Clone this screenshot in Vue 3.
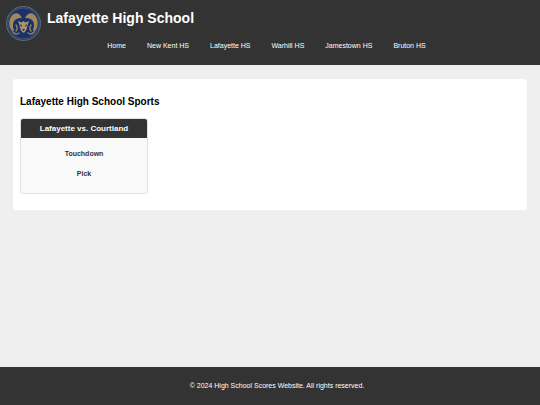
<template>
  <div class="page">
    <header class="site-header">
      <div class="brand">
        <svg class="logo" viewBox="0 0 70 70" role="img" aria-label="Lafayette Rams">
          <circle cx="35" cy="35" r="34" fill="#333a4c" stroke="#737c92" stroke-width="1.5" />
          <circle cx="35" cy="35" r="31" fill="#1a3266" stroke="#68728c" stroke-width="1" />
          <path d="M32 24C28 15 20 12 14 17 7 23 5 33 8 44l5 8 3-4c-3-7-3-14 1-19 4-4 9-5 15-5z" fill="#a08960" />
          <path d="M38 24c4-9 12-12 18-7 7 6 9 16 6 27l-5 8-3-4c3-7 3-14-1-19-4-4-9-5-15-5z" fill="#a08960" />
          <g fill="none" stroke="#8b8068" stroke-width="3" stroke-linecap="round">
            <path d="M20 38c3 4 3 8 0 12M14 52c3 4 8 5 12 2" />
            <path d="M50 38c-3 4-3 8 0 12M56 52c-3 4-8 5-12 2" />
          </g>
          <path d="M24 30l7 3 4-3 4 3 7-3-3 9-2 8-4 6h-4l-4-6-2-8z" fill="#a99573" />
          <path d="M28 36l4 3-2 3zM42 36l-4 3 2 3zM32 46h6l-3 4z" fill="#182746" />
        </svg>
        <h1>{{ schoolName }}</h1>
      </div>
      <nav aria-label="Schools">
        <ul>
          <li v-for="link in links" :key="link">
            <a href="#">{{ link }}</a>
          </li>
        </ul>
      </nav>
    </header>

    <main class="content">
      <h2>{{ schoolName }} Sports</h2>
      <article v-for="game in games" :key="game.title" class="game-card">
        <h3>{{ game.title }}</h3>
        <div class="game-details">
          <p v-for="play in game.plays" :key="play">{{ play }}</p>
        </div>
      </article>
    </main>

    <footer class="site-footer">
      <p>&copy; 2024 High School Scores Website. All rights reserved.</p>
    </footer>
  </div>
</template>

<script setup>
const schoolName = 'Lafayette High School';

const links = [
  'Home',
  'New Kent HS',
  'Lafayette HS',
  'Warhill HS',
  'Jamestown HS',
  'Bruton HS',
];

const games = [
  { title: 'Lafayette vs. Courtland', plays: ['Touchdown', 'Pick'] },
];
</script>

<style>
body {
  margin: 0;
  background: #efefef;
}
</style>

<style scoped>
.page {
  display: flex;
  flex-direction: column;
  min-height: 100vh;
  font-family: Arial, "Liberation Sans", sans-serif;
  font-size: 7px;
  line-height: 10px;
}

.site-header {
  background: #333;
  color: #fff;
  padding: 6px 6px 14px;
}

.brand {
  display: flex;
  align-items: flex-start;
  gap: 6px;
}

.logo {
  width: 35px;
  height: 35px;
}

h1 {
  margin: 2px 0 0;
  font-size: 14px;
  line-height: 20px;
}

nav ul {
  display: flex;
  justify-content: center;
  gap: 7px;
  margin: 0;
  padding: 0 7px 0 0;
  list-style: none;
}

nav a {
  display: block;
  padding: 0 7px;
  color: #fff;
  text-decoration: none;
}

.content {
  margin: 14px 13px;
  padding: 16px 7px;
  background: #fff;
  border-radius: 3px;
}

h2 {
  margin: 0 0 10px;
  font-size: 10px;
  line-height: 13px;
}

.game-card {
  box-sizing: border-box;
  min-width: 128px;
  width: 25%;
  overflow: hidden;
  border: 1px solid #e0e0e0;
  border-radius: 3px;
  background: #f9f9f9;
  text-align: center;
}

h3 {
  margin: 0;
  padding: 4px;
  background: #333;
  color: #fff;
  font-size: 8px;
  line-height: 11px;
}

.game-details {
  display: flex;
  flex-direction: column;
  gap: 10px;
  padding: 11px 7px 14px;
}

.game-details p {
  margin: 0;
  color: #333;
  font-weight: bold;
}

.site-footer {
  margin-top: auto;
  padding: 14px 0 14px 14px;
  background: #333;
  color: #fff;
  text-align: center;
}

.site-footer p {
  margin: 0;
}
</style>
